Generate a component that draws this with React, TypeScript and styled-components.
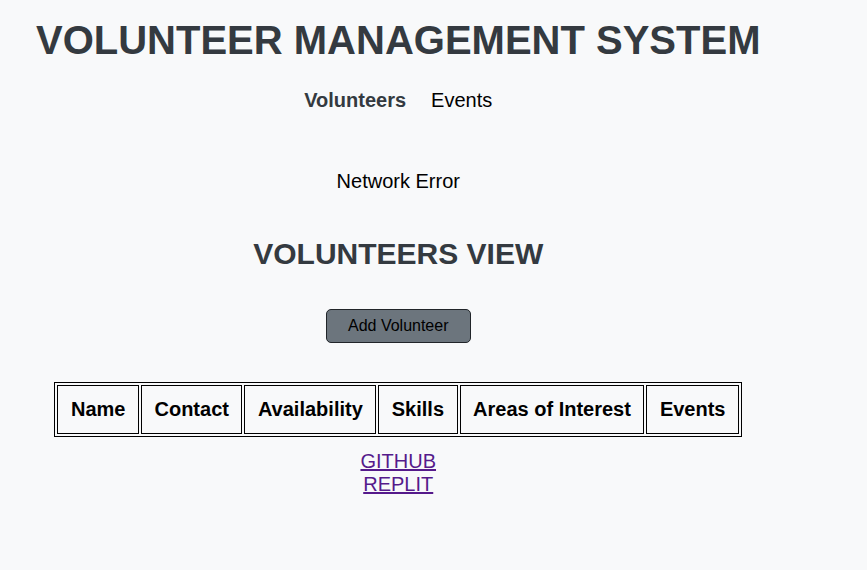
import styled, { createGlobalStyle } from "styled-components";

const GlobalStyle = createGlobalStyle`
  html, body {
    margin: 0;
    background: #f8f9fa;
    font-family: "Liberation Sans", Arial, sans-serif;
    color: #000;
  }
`;

const columns = ["Name", "Contact", "Availability", "Skills", "Areas of Interest", "Events"];

const App = () => {
  return (
    <>
      <GlobalStyle />
      <Page>
        <Title>VOLUNTEER MANAGEMENT SYSTEM</Title>
        <Nav>
          <NavLink href="#" $active>Volunteers</NavLink>
          <NavLink href="#">Events</NavLink>
        </Nav>
        <ErrorText>Network Error</ErrorText>
        <H2>VOLUNTEERS VIEW</H2>
        <Button>Add Volunteer</Button>
        <Table border={1}>
          <thead>
            <tr>
              {columns.map((c) => (
                <Th key={c}>{c}</Th>
              ))}
            </tr>
          </thead>
        </Table>
        <Links>
          <A href="#">GITHUB</A>
          <A href="#">REPLIT</A>
        </Links>
      </Page>
    </>
  );
};

export default App;

const Page = styled.div`
  width: fit-content;
  margin-left: 36px;
  display: flex;
  flex-direction: column;
  align-items: center;
`

const Title = styled.h1`
  margin: 17px 0 0;
  font-size: 40px;
  line-height: 46px;
  font-weight: bold;
  color: #343a40;
`

const Nav = styled.nav`
  margin-top: 26px;
  display: flex;
  gap: 25px;
`

const NavLink = styled.a<{ $active?: boolean }>`
  font-size: 20px;
  line-height: 23px;
  text-decoration: none;
  color: ${(p) => (p.$active ? "#343a40" : "#000")};
  font-weight: ${(p) => (p.$active ? "bold" : "normal")};
`

const ErrorText = styled.p`
  margin: 58px 0 0;
  font-size: 20px;
  line-height: 23px;
`

const H2 = styled.h2`
  margin: 43px 0 0;
  font-size: 30px;
  line-height: 36px;
  color: #343a40;
`

const Button = styled.button`
  margin-top: 37px;
  padding: 7px 21px;
  font-family: "Liberation Sans", Arial, sans-serif;
  font-size: 16px;
  line-height: 18px;
  color: #000;
  background: #6c757d;
  border: 1px solid #212529;
  border-radius: 5px;
`

const Table = styled.table`
  margin-top: 39px;
  border: 1px solid #000;
  border-spacing: 2px;
`

const Th = styled.th`
  border: 1px solid #000;
  padding: 12px 12.5px;
  font-size: 20px;
  line-height: 23px;
  font-weight: bold;
`

const Links = styled.div`
  margin-top: 13px;
  display: flex;
  flex-direction: column;
  align-items: center;
`

const A = styled.a`
  font-size: 20px;
  line-height: 23px;
  color: #551a8b;
`
